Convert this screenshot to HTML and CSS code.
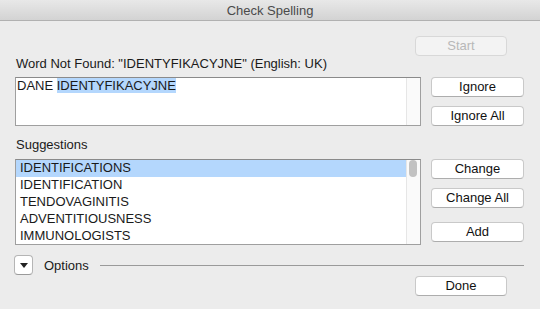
FILE: index.html
```html
<!DOCTYPE html>
<html lang="en">
<head>
  <meta charset="UTF-8">
  <title>Check Spelling</title>
  <link rel="stylesheet" href="styles.css">
</head>
<body>

<div class="titlebar">Check Spelling</div>

<div class="panel">
  <div class="start-row">
    <button class="btn btn-wide" disabled>Start</button>
  </div>

  <div class="label label-word">Word Not Found: "IDENTYFIKACYJNE" (English: UK)</div>

  <div class="row">
    <div class="field field-text">
      <div class="field-body">
        <div class="sentence">DANE <span class="hilite">IDENTYFIKACYJNE</span></div>
      </div>
      <div class="track"></div>
    </div>
    <div class="buttons">
      <button class="btn">Ignore</button>
      <button class="btn">Ignore All</button>
    </div>
  </div>

  <div class="label label-sugg">Suggestions</div>

  <div class="row">
    <div class="field field-list">
      <ul class="field-body list" id="suggestions"></ul>
      <div class="track"><div class="thumb"></div></div>
    </div>
    <div class="buttons">
      <button class="btn">Change</button>
      <button class="btn">Change All</button>
      <button class="btn btn-add">Add</button>
    </div>
  </div>

  <div class="options-row">
    <button class="disclosure"><span class="tri"></span></button>
    <span class="options-label">Options</span>
    <div class="rule"></div>
  </div>

  <div class="done-row">
    <button class="btn btn-wide">Done</button>
  </div>
</div>

<script>
  const words = ['IDENTIFICATIONS', 'IDENTIFICATION', 'TENDOVAGINITIS', 'ADVENTITIOUSNESS', 'IMMUNOLOGISTS'];
  const list = document.getElementById('suggestions');

  list.innerHTML = words.map((w, i) =>
    `<li class="${i === 0 ? 'selected' : ''}">${w}</li>`
  ).join('');
</script>

</body>
</html>
```

FILE: styles.css
```css
body {
  font-family: 'Liberation Sans', Arial, sans-serif;
  font-size: 13px;
  color: #1a1a1a;
  background-color: #ececec;
  margin: 0;
  width: 540px;
  height: 309px;
  overflow: hidden;
}

.titlebar {
  height: 20px;
  line-height: 21px;
  text-align: center;
  color: #4a4a4a;
  background: linear-gradient(#e8e8e8, #d3d3d3);
  border-bottom: 1px solid #b1b1b1;
}

.panel {
  padding: 0 16px 0 15px;
}

.start-row {
  display: flex;
  justify-content: flex-end;
  padding-right: 17px;
  margin-top: 15px;
}

.btn {
  font-family: inherit;
  font-size: 13px;
  color: #111;
  background-color: #fff;
  border: 1px solid #c9c9c9;
  border-bottom-color: #adadad;
  border-radius: 4px;
  height: 20px;
  width: 93px;
  padding: 0;
  line-height: 18px;
}

.btn-wide {
  width: 92px;
}

.btn:disabled {
  color: #b8b8b8;
  background-color: #f3f3f3;
  border-color: #d8d8d8;
}

.label {
  line-height: 16px;
  padding-left: 1px;
}

.label-word {
  margin-bottom: 5px;
}

.label-sugg {
  margin-top: 11px;
  margin-bottom: 6px;
}

.row {
  display: flex;
  gap: 10px;
}

.field {
  display: flex;
  width: 404px;
  background-color: #fff;
  border: 1px solid #9f9f9f;
  border-top-color: #8a8a8a;
}

.field-text {
  height: 47px;
}

.field-list {
  height: 84px;
}

.field-body {
  flex: 1;
}

.sentence {
  padding: 0 0 0 1px;
  line-height: 16px;
}

.hilite {
  background-color: #b4d7fd;
}

.track {
  width: 14px;
  background-color: #fafafa;
  border-left: 1px solid #e6e6e6;
  padding: 0 3px 0 2px;
  box-sizing: border-box;
}

.thumb {
  height: 17px;
  border-radius: 4px;
  background-color: #c2c2c2;
}

.list {
  list-style: none;
  margin: 0;
  padding: 0;
}

.list li {
  height: 17px;
  line-height: 16px;
  padding-left: 4px;
}

.list li.selected {
  background-color: #b4d7fd;
}

.buttons {
  display: flex;
  flex-direction: column;
  gap: 9px;
}

.btn-add {
  margin-top: 5px;
}

.options-row {
  display: flex;
  align-items: center;
  margin-top: 10px;
  margin-left: -1px;
  height: 20px;
}

.disclosure {
  width: 19px;
  height: 20px;
  padding: 0;
  background-color: #fff;
  border: 1px solid #b5b5b5;
  border-bottom-color: #9a9a9a;
  border-radius: 4px;
  display: flex;
  align-items: center;
  justify-content: center;
}

.tri {
  width: 0;
  height: 0;
  border-left: 4px solid transparent;
  border-right: 4px solid transparent;
  border-top: 5px solid #222;
}

.options-label {
  margin-left: 11px;
  margin-right: 11px;
}

.rule {
  flex: 1;
  height: 1px;
  background-color: #9a9a9a;
}

.done-row {
  display: flex;
  justify-content: flex-end;
  padding-right: 17px;
  margin-top: 1px;
}
```
